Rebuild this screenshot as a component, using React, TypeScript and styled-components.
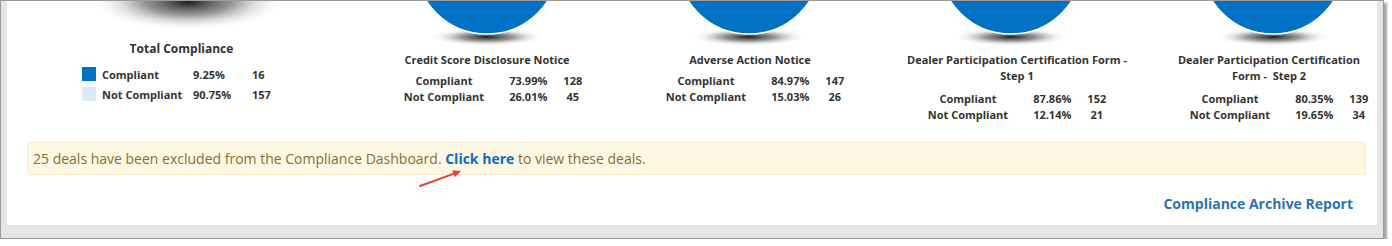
import styled, { createGlobalStyle } from 'styled-components';

const GlobalStyle = createGlobalStyle`
  body {
    margin: 0;
    background: #fff;
    font-family: "Open Sans", "Liberation Sans", sans-serif;
  }
`;

const Frame = styled.div`
  width: 1384px;
  box-sizing: border-box;
  border: 1px solid #9b9b9b;
  background: #e6e6e6;
  padding: 0 6px 13px 6px;
  box-shadow: 3px 3px 2px rgba(0, 0, 0, 0.35);
`;

const Panel = styled.div`
  position: relative;
  background: #fff;
  height: 224px;
  overflow: hidden;
`;

const ChartsRow = styled.div`
  display: flex;
  height: 141px;
`;

const Column = styled.div<{ $width: number }>`
  flex: 0 0 ${({ $width }) => $width}px;
  display: flex;
  flex-direction: column;
  align-items: center;
`;

const Title = styled.div<{ $size?: number; $shift?: number }>`
  margin-top: 6px;
  transform: translateX(${({ $shift = 0 }) => $shift}px);
  font-size: ${({ $size = 11 }) => $size}px;
  font-weight: 700;
  line-height: 16px;
  color: #333;
  text-align: center;
  white-space: nowrap;
`;

const StatsGrid = styled.div<{ $gap: number }>`
  display: grid;
  grid-template-columns: auto auto auto;
  column-gap: 16px;
  margin-top: ${({ $gap }) => $gap}px;
  padding-left: 12px;
  font-size: 11px;
  font-weight: 700;
  line-height: 16px;
  color: #333;
  text-align: center;
  white-space: nowrap;
`;

const StatLabel = styled.span`
  padding-right: 9px;
`;

const Legend = styled.div`
  align-self: flex-start;
  margin: 7px 0 0 75px;
  display: grid;
  grid-template-columns: 20px 91px 59px auto;
  grid-auto-rows: 20px;
  align-items: center;
  font-size: 11px;
  font-weight: 700;
  color: #333;
  white-space: nowrap;
`;

const Swatch = styled.span<{ $color: string }>`
  width: 14px;
  height: 14px;
  background: ${({ $color }) => $color};
`;

const Alert = styled.div`
  margin: 0 11px 0 20px;
  height: 33px;
  box-sizing: border-box;
  display: flex;
  align-items: center;
  padding: 0 5px;
  border: 1px solid #faebcc;
  border-radius: 3px;
  background: #fcf8e3;
  color: #8a6d3b;
  font-size: 14px;
  white-space: pre;
`;

const AlertLink = styled.a`
  color: #0b6dc2;
  font-weight: 700;
  text-decoration: none;
`;

const Footer = styled.div`
  display: flex;
  justify-content: flex-end;
  margin-top: 19px;
  padding-right: 24px;
`;

const FooterLink = styled.a`
  font-size: 14px;
  font-weight: 700;
  line-height: 20px;
  color: #2a73b3;
  text-decoration: none;
`;

const Arrow = styled.svg`
  position: absolute;
  left: 408px;
  top: 165px;
`;

const BLUE = '#0072c6';

type Chart = {
  title: React.ReactNode;
  shift: number;
  gap: number;
  compliant: [string, string];
  notCompliant: [string, string];
};

const charts: Chart[] = [
  {
    title: 'Credit Score Disclosure Notice',
    shift: 0,
    gap: 5,
    compliant: ['73.99%', '128'],
    notCompliant: ['26.01%', '45'],
  },
  {
    title: 'Adverse Action Notice',
    shift: 1,
    gap: 5,
    compliant: ['84.97%', '147'],
    notCompliant: ['15.03%', '26'],
  },
  {
    title: (
      <>
        Dealer Participation Certification Form -<br />
        Step 1
      </>
    ),
    shift: 6,
    gap: 7,
    compliant: ['87.86%', '152'],
    notCompliant: ['12.14%', '21'],
  },
  {
    title: (
      <>
        Dealer Participation Certification<br />
        Form - &nbsp;Step 2
      </>
    ),
    shift: -4,
    gap: 7,
    compliant: ['80.35%', '139'],
    notCompliant: ['19.65%', '34'],
  },
];

const ShadowGradient = ({ id }: { id: string }) => (
  <defs>
    <radialGradient id={id} cx="50%" cy="50%" r="50%">
      <stop offset="0%" stopColor="#111" stopOpacity="0.95" />
      <stop offset="45%" stopColor="#555" stopOpacity="0.6" />
      <stop offset="100%" stopColor="#fff" stopOpacity="0" />
    </radialGradient>
  </defs>
);

const TotalShadow = () => (
  <svg width="349" height="34">
    <ShadowGradient id="total-shadow" />
    <ellipse cx="181" cy="1" rx="98" ry="29" fill="url(#total-shadow)" />
  </svg>
);

const Pie = ({ index }: { index: number }) => (
  <svg width="262" height="45">
    <ShadowGradient id={`pie-shadow-${index}`} />
    <ellipse cx="131" cy="36" rx="58" ry="9" fill={`url(#pie-shadow-${index})`} />
    <circle cx="131" cy="-39" r="72" fill={BLUE} stroke="#fff" strokeWidth="1.5" />
  </svg>
);

export default function App() {
  return (
    <>
      <GlobalStyle />
      <Frame>
        <Panel>
          <ChartsRow>
            <Column $width={349}>
              <TotalShadow />
              <Title $size={12}>Total Compliance</Title>
              <Legend>
                <Swatch $color={BLUE} />
                <span>Compliant</span>
                <span>9.25%</span>
                <span>16</span>
                <Swatch $color="#dde9f5" />
                <span>Not Compliant</span>
                <span>90.75%</span>
                <span>157</span>
              </Legend>
            </Column>
            {charts.map((chart, i) => (
              <Column key={i} $width={262}>
                <Pie index={i} />
                <Title $shift={chart.shift}>{chart.title}</Title>
                <StatsGrid $gap={chart.gap}>
                  <StatLabel>Compliant</StatLabel>
                  <span>{chart.compliant[0]}</span>
                  <span>{chart.compliant[1]}</span>
                  <StatLabel>Not Compliant</StatLabel>
                  <span>{chart.notCompliant[0]}</span>
                  <span>{chart.notCompliant[1]}</span>
                </StatsGrid>
              </Column>
            ))}
          </ChartsRow>
          <Alert>
            25 deals have been excluded from the Compliance Dashboard. <AlertLink href="#">Click here</AlertLink> to view these deals.
          </Alert>
          <Footer>
            <FooterLink href="#">Compliance Archive Report</FooterLink>
          </Footer>
          <Arrow width="52" height="25" viewBox="0 0 52 25">
            <line x1="5" y1="20" x2="39" y2="7.6" stroke="#e8403a" strokeWidth="2" strokeLinecap="round" />
            <polygon points="46,5 39.7,11.2 37.2,4.3" fill="#e8403a" />
          </Arrow>
        </Panel>
      </Frame>
    </>
  );
}
